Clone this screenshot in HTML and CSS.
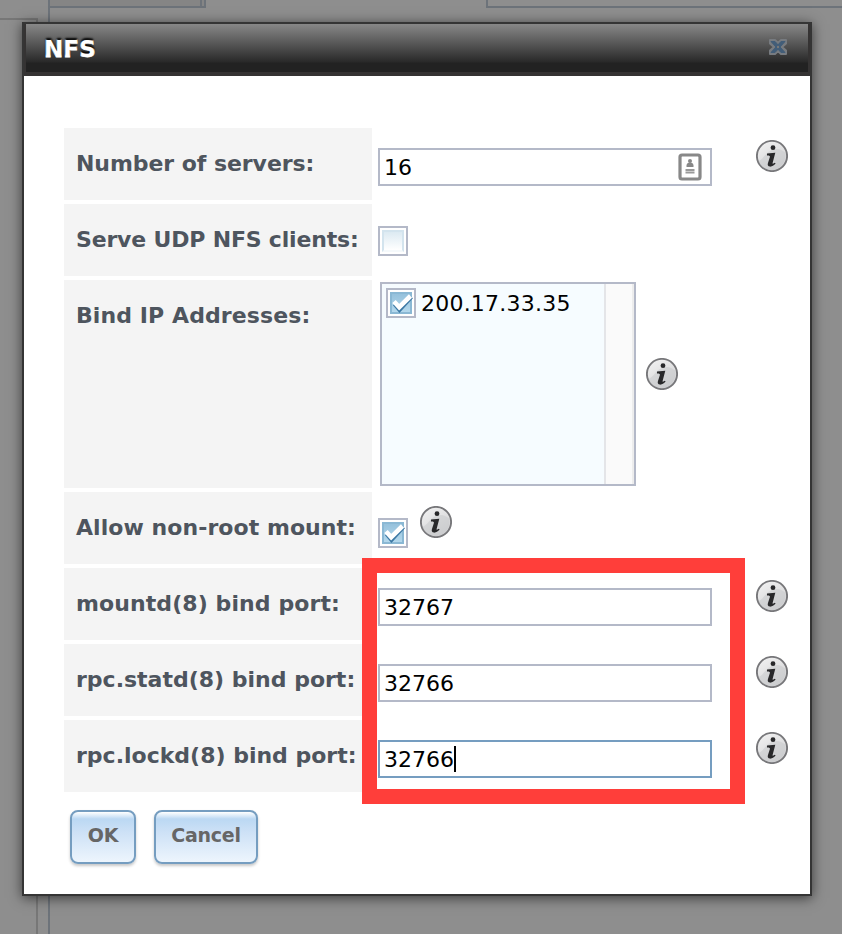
FILE: index.html
```
<!DOCTYPE html>
<html lang="en">
<head>
<meta charset="utf-8">
<title>NFS</title>
<link rel="stylesheet" href="styles.css">
</head>
<body>
<svg class="defs" width="0" height="0" aria-hidden="true">
  <defs>
    <linearGradient id="silver" x1="0" y1="0" x2="0.6" y2="1">
      <stop offset="0" stop-color="#f4f4f4"/><stop offset="1" stop-color="#d2d2d4"/>
    </linearGradient>
    <linearGradient id="blue" x1="0" y1="0" x2="0" y2="1">
      <stop offset="0" stop-color="#94c0db"/><stop offset="1" stop-color="#b5d9ed"/>
    </linearGradient>
    <symbol id="info" viewBox="0 0 32 32">
      <circle cx="16" cy="16" r="15.1" fill="url(#silver)" stroke="#77777a" stroke-width="1.9"/>
      <path d="M2.5 21C8 19 9 13 16 10c5-2 9-1 13.500 3C30 24 23 30 16 30 9 30 4 26 2.500 21z" fill="#c6c7ca" opacity=".5"/>
      <circle cx="17" cy="7.700" r="2.400" fill="#28282a"/>
      <path d="M11 13.600l8.300-.8-2.700 10.300c-.2 1 .5 1 1.900-.4l1.200.9c-2 2.300-4 3.200-5.700 3-2.100-.2-2.600-1.600-2.100-3.300l2-6.400c.3-1-.4-1.600-2.900-1.500z" fill="#28282a"/>
    </symbol>
    <symbol id="check" viewBox="0 0 30 30">
      <rect x="5" y="5" width="20" height="20" fill="url(#blue)" stroke="#8ab8d4" stroke-width="2"/>
      <path d="M8.500 16l5 6L25.500 9" fill="none" stroke="#3c78a4" stroke-width="4"/>
      <path d="M8 13.500l5.200 5.700L24.500 8" fill="none" stroke="#fff" stroke-width="4.600"/>
    </symbol>
  </defs>
</svg>
<div class="page">
  <div class="edge tab"></div><div class="edge tab-end"></div><div class="edge panel"></div>
  <div class="edge side"></div><div class="edge content"></div>
  <div class="dialog">
    <div class="titlebar">
      <span class="title">NFS</span>
      <svg class="close" viewBox="0 0 24 22"><path d="M4 4h5l3 3 3-3h5v3.500L16 11l4 3.500V18h-5l-3-3-3 3H4v-3.500L8 11 4 7.500z" fill="#777" stroke="#777b80" stroke-width="2" stroke-linejoin="round"/><path d="M5 5.500h4l10 11h-4zM19 5.500h-4l-10 11h4z" fill="#425d78" stroke="#425d78"/></svg>
    </div>
    <div class="form">
      <div class="row"><div class="label"><span class="l1">Number of servers:</span></div><div class="field">
        <div class="input"><span>16</span><svg class="card" viewBox="0 0 24 28"><rect x="2" y="2" width="20" height="24" rx="2" fill="#fff" stroke="#888" stroke-width="3.200"/><circle cx="12" cy="8" r="2" fill="#888"/><path d="M8.500 14v-1.500c0-2 1.500-3 3.500-3s3.500 1 3.500 3V14z" fill="#888"/><path d="M7.500 17h9M7.500 19.500h9" stroke="#999" stroke-width="1.800"/></svg></div>
        <svg class="info far"><use href="#info"/></svg></div></div>
      <div class="row"><div class="label"><span class="l2">Serve UDP NFS clients:</span></div><div class="field"><div class="check udp"><i></i></div></div></div>
      <div class="row tall"><div class="label"><span class="l3">Bind IP Addresses:</span></div><div class="field">
        <div class="list"><div class="option"><div class="check"><svg><use href="#check"/></svg></div><span>200.17.33.35</span></div><div class="scroll"></div></div>
        <svg class="info mid"><use href="#info"/></svg></div></div>
      <div class="row"><div class="label"><span class="l4">Allow non-root mount:</span></div><div class="field"><div class="check root"><svg><use href="#check"/></svg></div><svg class="info near"><use href="#info"/></svg></div></div>
      <div class="row"><div class="label"><span class="l5">mountd(8) bind port:</span></div><div class="field"><div class="input"><span>32767</span></div><svg class="info far"><use href="#info"/></svg></div></div>
      <div class="row"><div class="label"><span class="l6">rpc.statd(8) bind port:</span></div><div class="field"><div class="input"><span>32766</span></div><svg class="info far"><use href="#info"/></svg></div></div>
      <div class="row"><div class="label"><span class="l7">rpc.lockd(8) bind port:</span></div><div class="field"><div class="input focus"><span>32766</span><b class="caret"></b></div><svg class="info far"><use href="#info"/></svg></div></div>
    </div>
    <div class="actions"><div class="button ok"><span>OK</span></div><div class="button cancel"><span>Cancel</span></div></div>
  </div>
  <div class="highlight"></div>
</div>
</body>
</html>
```
FILE: styles.css
```
* { box-sizing: border-box; }
body { margin: 0; font-family: Verdana, "DejaVu Sans", sans-serif; }
.defs { position: absolute; }
.page { position: relative; width: 842px; height: 934px; padding: 22px 30px 0 22px; background: #8e8e8e; overflow: hidden; }
.edge { position: absolute; border: 0 solid #6d737a; }
.tab { left: 48px; top: -2px; width: 158px; height: 10px; border-width: 0 2px 2px 0; background: #858585; }
.tab-end { left: 200px; top: -2px; width: 2px; height: 8px; background: #6d737a; }
.panel { left: 486px; top: -2px; width: 360px; height: 10px; border-width: 0 0 2px 2px; }
.side { left: -2px; top: 18px; width: 40px; height: 920px; border: 2px solid #777; }
.content { left: 48px; top: 0; width: 2px; height: 934px; background: #6d737a; }
.dialog { position: relative; width: 790px; height: 874px; border: 2px solid #353535; background: #fff; box-shadow: 0 2px 12px rgba(0,0,0,.6); }
.titlebar { display: flex; justify-content: space-between; height: 52px; padding: 0 18px 0 18px; border: 2px solid #353333; border-width: 0 2px 4px; background: linear-gradient(#888 0, #292929 38px, #222 39px, #222 100%); }
.title { margin-top: 8px; font-size: 23px; line-height: 34px; font-weight: bold; letter-spacing: .1px; -webkit-text-stroke: .8px #fff; paint-order: stroke; color: #fff; text-shadow: 0 -2px 2px #000; }
.close { width: 24px; height: 22px; margin-top: 12px; }
.form { display: grid; gap: 4px; padding: 52px 0 0 40px; }
.row { display: grid; grid-template-columns: 308px 1fr; height: 72px; }
.tall { height: 208px; }
.label { padding: 21px 0 0 12px; background: #f4f4f4; color: #4e555e; font-size: 22px; line-height: 30px; font-weight: bold; white-space: nowrap; }
.label span { display: inline-block; }
.l1 { letter-spacing: -.06px; }
.l2 { letter-spacing: -.18px; }
.l3 { letter-spacing: .09px; }
.l4 { letter-spacing: .06px; }
.l5 { letter-spacing: .09px; }
.field { display: flex; align-items: flex-start; padding-left: 6px; }
.input { display: flex; align-items: center; width: 334px; height: 38px; margin-top: 20px; padding: 2px 8px 0 4px; border: 2px solid #b4b9c8; background: #fff; font-size: 22px; line-height: 30px; color: #000; }
.input.focus { border-color: #759dc0; }
.caret { width: 2px; height: 26px; margin-top: -2px; background: #000; }
.card { width: 24px; height: 28px; margin: -2px 0 0 auto; }
.info { flex: none; width: 32px; height: 32px; }
.far { margin: 12px 0 0 44px; }
.mid { margin: 78px 0 0 10px; }
.near { margin: 14px 0 0 12px; }
.check { flex: none; width: 30px; height: 30px; border: 2px solid #b4b9c8; background: #fff; }
.check svg { display: block; width: 30px; height: 30px; margin: -2px; }
.check i { display: block; width: 22px; height: 22px; margin: 2px; border: 2px solid #d3e4ee; border-bottom-color: #f5f9fb; background: linear-gradient(#dceaf2, #fff); }
.udp { margin-top: 22px; }
.root { margin-top: 26px; }
.list { display: flex; justify-content: space-between; width: 256px; height: 204px; margin: 2px 0 0 2px; border: 2px solid #b4b9c8; background: #f6fcff; }
.option { display: flex; padding: 4px 0 0 4px; font-size: 22px; line-height: 30px; }
.option span { margin: 1px 0 0 5px; letter-spacing: .22px; }
.scroll { width: 30px; border: solid #e4e5e8; border-width: 0 2px; background: #fafafa; border-right-color: #ededed; }
.actions { display: flex; gap: 18px; padding: 18px 0 0 46px; }
.button { height: 54px; border: 2px solid #759dc0; border-radius: 8px; background: linear-gradient(#fff 0, #bbd8f3 7px, #cde1f6 20px, #edf5fd 100%); box-shadow: 0 2px 3px rgba(0,0,0,.22); color: #666; font-size: 19px; line-height: 46px; font-weight: bold; letter-spacing: -.25px; text-align: center; white-space: nowrap; }
.ok { width: 66px; }
.cancel { width: 104px; }
.highlight { position: absolute; left: 362px; top: 558px; width: 383px; height: 246px; border: 15px solid #ff3e3a; }
```
